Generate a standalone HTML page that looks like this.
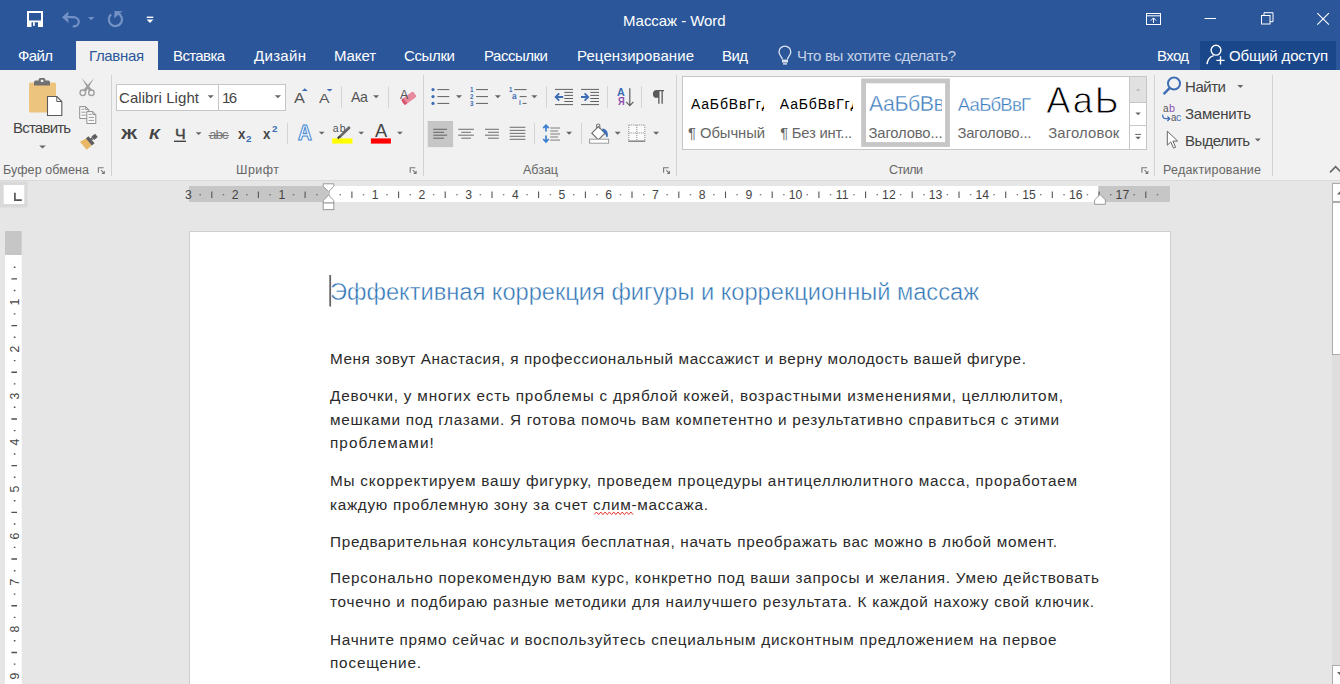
<!DOCTYPE html>
<html lang="ru"><head><meta charset="utf-8"><title>Массаж - Word</title>
<style>
*{box-sizing:border-box;margin:0;padding:0}
html,body{width:1340px;height:684px;overflow:hidden;background:#e6e6e6;font-family:"Liberation Sans",sans-serif}
.t{position:absolute;white-space:pre;display:block}
.a{position:absolute}
#title{left:0;top:0;width:1340px;height:70px;background:#2b579a}
#tab{left:76px;top:41px;width:82px;height:30px;background:#f1f1f1}
#share{left:1200px;top:41px;width:136px;height:29px;background:#19478a}
#ribbon{left:0;top:70px;width:1340px;height:111px;background:#f1f1f1;border-bottom:1px solid #dadada}
.vs{position:absolute;width:1px;background:#d2d2d2}
#page{left:189px;top:231px;width:982px;height:453px;background:#fff;border:1px solid #cfcfcf;border-bottom:none}
svg{position:absolute;overflow:hidden}

</style></head><body>
<div class="a" id="title"></div>
<div class="a" id="tab"></div>
<div class="a" id="share"></div>
<div class="a" id="ribbon"></div>
<div class="vs" style="left:111px;top:75px;height:100.5px"></div>
<div class="vs" style="left:423px;top:75px;height:100.5px"></div>
<div class="vs" style="left:676px;top:75px;height:100.5px"></div>
<div class="vs" style="left:1154px;top:75px;height:100.5px"></div>
<div class="vs" style="left:1272px;top:75px;height:100.5px"></div>
<div class="a" id="page"></div>
<svg width="1340" height="684" viewBox="0 0 1340 684" style="left:0;top:0"><path d="M27 11h16v16h-16z M29 13v7.5h12v-7.5z M31.5 22.2v4.8h6.5v-4.8z" fill="#fff" fill-rule="evenodd"/>
<rect x="33" y="22.2" width="1.8" height="3.6" fill="#fff"/>
<path d="M63.5 17.2H73.5a5.3 4.6 0 0 1 0 9.2H72.8" fill="none" stroke="#7391c6" stroke-width="2.2"/>
<path d="M62 17.2l6.4-5.6v3.4l-2.6 2.2 2.6 2.4v3.3z" fill="#7391c6"/>
<path d="M88 17h6.4l-3.2 3.2z" fill="#7391c6"/>
<path d="M117.5 13.2a6.6 6.6 0 1 1 -6.3 1.2" fill="none" stroke="#7391c6" stroke-width="2.3"/>
<path d="M114.2 18.5l0.3-7.6 8.2 0.4-3.2 2.2z" fill="#7391c6"/>
<rect x="146.7" y="16.6" width="6.6" height="1.4" fill="#fff"/>
<path d="M146.6 19.6h6.8l-3.4 3.4z" fill="#fff"/>
<rect x="1146.5" y="13.5" width="14" height="11" fill="none" stroke="#fff" stroke-width="1"/>
<path d="M1146.5 15.8h14" stroke="#fff" stroke-width="1"/>
<path d="M1153.5 23V18.2M1150.8 20.6l2.7-2.7 2.7 2.7" fill="none" stroke="#fff" stroke-width="1"/>
<path d="M1204.5 18.5h11.5" stroke="#fff" stroke-width="1"/>
<rect x="1261.5" y="15.5" width="8.5" height="8.5" fill="none" stroke="#fff" stroke-width="1"/>
<path d="M1264 15.5v-2.8h9v9h-3" fill="none" stroke="#fff" stroke-width="1"/>
<path d="M1317.3 13.2l11.6 11.4M1328.9 13.2l-11.6 11.4" stroke="#fff" stroke-width="1.1"/>
<path d="M782.4 59.6c0-2.6-3.4-4.2-3.4-7.6a5.9 5.9 0 0 1 11.8 0c0 3.4-3.4 5-3.4 7.6" fill="none" stroke="#dbe3f1" stroke-width="1.3"/>
<rect x="782" y="59.6" width="6" height="2.9" fill="#dbe3f1"/><rect x="783" y="63.2" width="4" height="1.4" fill="#dbe3f1"/>
<circle cx="1216" cy="50.2" r="4.9" fill="none" stroke="#fff" stroke-width="1.4"/>
<path d="M1207 64.2c0.5-4.6 3.2-7.6 6.6-8.6" fill="none" stroke="#fff" stroke-width="1.4"/>
<path d="M1216.4 60.4h8.2M1220.5 56.3v8.2" stroke="#fff" stroke-width="1.4"/>
<rect x="29" y="82.5" width="27" height="30" rx="1.5" fill="#edc47e"/>
<path d="M34 85.6v-3.4a1.6 1.6 0 0 1 1.6-1.6h3v-1a1.6 1.6 0 0 1 1.6-1.6h3.6a1.6 1.6 0 0 1 1.6 1.6v1h3a1.6 1.6 0 0 1 1.6 1.6v3.4z" fill="#717171"/>
<rect x="40.8" y="79.8" width="2.6" height="2.2" fill="#f1f1f1"/>
<path d="M47.5 96.5h9.3l5 5v14h-14.3z" fill="#fff" stroke="#5a5a5a" stroke-width="1.1"/>
<path d="M56.8 96.5v5h5" fill="none" stroke="#5a5a5a" stroke-width="1"/>
<path d="M39.2 145.4h6.6l-3.3 3.2z" fill="#666"/>
<path d="M81.6 78L92 89.6 89.3 91.2z" fill="#9e9e9e"/><path d="M94.1 78L83.7 89.6 86.4 91.2z" fill="#9e9e9e"/>
<circle cx="82.8" cy="92.8" r="2.8" fill="none" stroke="#9e9e9e" stroke-width="1.3"/><circle cx="91.4" cy="92.8" r="2.8" fill="none" stroke="#9e9e9e" stroke-width="1.3"/>
<path d="M79.7 106.6h6l3 3v8.9h-9z" fill="#fafafa" stroke="#8f8f8f" stroke-width="1"/><path d="M85.7 106.6v3h3" fill="none" stroke="#8f8f8f" stroke-width="1"/>
<path d="M81.4 109.2h3M81.4 112.2h4.4M81.4 115.2h4.4" stroke="#9a9a9a" stroke-width="1"/>
<path d="M86.8 111.6h6l3 3v8.9h-9z" fill="#fafafa" stroke="#8f8f8f" stroke-width="1"/><path d="M92.8 111.6v3h3" fill="none" stroke="#8f8f8f" stroke-width="1"/>
<path d="M88.6 114.4h3M88.6 117.4h5.4M88.6 120.4h5.4" stroke="#9a9a9a" stroke-width="1"/>
<path d="M79.9 141.8l6.2-3.4 5.6 7-5 4.4z" fill="#e9b765"/>
<path d="M87.2 137.4l6 7" stroke="#5e5e5e" stroke-width="3.6"/>
<path d="M91 139.4l1.6-1.2" stroke="#5e5e5e" stroke-width="2.4"/>
<rect x="-2.3" y="-2.2" width="4.6" height="4.4" transform="translate(94.6 136.8) rotate(-38)" fill="#5e5e5e"/>
<path d="M98.4 172.79999999999998V167.7h5.2" fill="none" stroke="#777" stroke-width="1.1"/>
<path d="M101.0 170.1l3 3" fill="none" stroke="#777" stroke-width="1.1"/>
<path d="M104.80000000000001 170.6v3.4h-3.4z" fill="#777"/>
<path d="M410.2 172.79999999999998V167.7h5.2" fill="none" stroke="#777" stroke-width="1.1"/>
<path d="M412.8 170.1l3 3" fill="none" stroke="#777" stroke-width="1.1"/>
<path d="M416.59999999999997 170.6v3.4h-3.4z" fill="#777"/>
<path d="M663.6 172.79999999999998V167.7h5.2" fill="none" stroke="#777" stroke-width="1.1"/>
<path d="M666.2 170.1l3 3" fill="none" stroke="#777" stroke-width="1.1"/>
<path d="M670.0 170.6v3.4h-3.4z" fill="#777"/>
<path d="M1141.9 172.79999999999998V167.7h5.2" fill="none" stroke="#777" stroke-width="1.1"/>
<path d="M1144.5 170.1l3 3" fill="none" stroke="#777" stroke-width="1.1"/>
<path d="M1148.3000000000002 170.6v3.4h-3.4z" fill="#777"/>
<path d="M1330 172.4l5.6-5.8 5.6 5.8" fill="none" stroke="#666" stroke-width="1.6"/>
<rect x="116.5" y="84.5" width="102" height="26" fill="#fff" stroke="#c6c6c6"/>
<rect x="218.5" y="84.5" width="67" height="26" fill="#fff" stroke="#c6c6c6"/>
<path d="M207.6 95.2h6.2l-3.1 3.1z" fill="#666"/>
<path d="M274.8 95.2h6.2l-3.1 3.1z" fill="#666"/>
<path d="M301.9 90.9h5.9l-2.95-2.6z" fill="#3d6db5"/>
<path d="M326.7 89h5.9l-2.95 2.6z" fill="#3d6db5"/>
<path d="M341.5 86.5V107.7" stroke="#d4d4d4" stroke-width="1"/>
<path d="M388.5 86.5V107.7" stroke="#d4d4d4" stroke-width="1"/>
<path d="M373.1 95.2h6l-3.0 3z" fill="#666"/>
<g transform="translate(408.9 98.2) rotate(-36)"><rect x="-7.4" y="-3.3" width="14.8" height="6.6" rx="1.6" fill="#e88a9e"/><path d="M-7.4 -1.7a1.6 1.6 0 0 1 1.6-1.6h1.2v6.6h-1.2a1.6 1.6 0 0 1-1.6-1.6z" fill="#d9536f"/></g>
<path d="M174 141.3h12" stroke="#444" stroke-width="1.4"/>
<path d="M195.8 132.2h5.8l-2.9 2.9z" fill="#666"/>
<path d="M208.5 135.6h20.5" stroke="#666" stroke-width="1"/>
<path d="M287.5 123V144" stroke="#d4d4d4" stroke-width="1"/>
<path d="M318.8 131.7h5.8l-2.9 2.9z" fill="#666"/>
<rect x="332.2" y="138.4" width="20.2" height="5.2" fill="#ffff00"/>
<path d="M339.2 137.4l10.6-10.4" stroke="#666" stroke-width="2.6"/><path d="M337.6 138.4l2.4-2.2" stroke="#444" stroke-width="2"/>
<path d="M358.3 131.7h5.8l-2.9 2.9z" fill="#666"/>
<rect x="370.9" y="138.4" width="20" height="5.2" fill="#ff0000"/>
<path d="M397 131.7h5.8l-2.9 2.9z" fill="#666"/><circle cx="433" cy="89.6" r="1.6" fill="#3d6db5"/>
<path d="M437.4 89.6H449.3" stroke="#5f5f5f" stroke-width="1"/>
<path d="M476.1 89.6H488" stroke="#5f5f5f" stroke-width="1"/>
<circle cx="433" cy="96.6" r="1.6" fill="#3d6db5"/>
<path d="M437.4 96.6H449.3" stroke="#5f5f5f" stroke-width="1"/>
<path d="M476.1 96.6H488" stroke="#5f5f5f" stroke-width="1"/>
<circle cx="433" cy="103.4" r="1.6" fill="#3d6db5"/>
<path d="M437.4 103.4H449.3" stroke="#5f5f5f" stroke-width="1"/>
<path d="M476.1 103.4H488" stroke="#5f5f5f" stroke-width="1"/>
<path d="M456 95.2h6l-3.0 3z" fill="#666"/>
<path d="M494.8 95.2h6l-3.0 3z" fill="#666"/>
<path d="M531.3 95.2h6l-3.0 3z" fill="#666"/>
<path d="M514.3 89.6H526.6M519.7 96.6H526.6M522.6 103.4H526.6" stroke="#5f5f5f" stroke-width="1"/>
<path d="M546.5 86.2V107.7" stroke="#d4d4d4" stroke-width="1"/>
<path d="M607.5 86.2V107.7" stroke="#d4d4d4" stroke-width="1"/>
<path d="M641.5 86.2V107.7" stroke="#d4d4d4" stroke-width="1"/>
<path d="M555 89.4h18M555 104.6h18" stroke="#5f5f5f" stroke-width="1"/>
<path d="M564.3 92.4h8.7" stroke="#5f5f5f" stroke-width="1"/>
<path d="M564.3 95.4h8.7" stroke="#5f5f5f" stroke-width="1"/>
<path d="M564.3 98.5h8.7" stroke="#5f5f5f" stroke-width="1"/>
<path d="M564.3 101.5h8.7" stroke="#5f5f5f" stroke-width="1"/>
<path d="M555.6 97h7.6M559.2 93.4l-3.6 3.6 3.6 3.6" fill="none" stroke="#3d6db5" stroke-width="1.8"/>
<path d="M581 89.4h18M581 104.6h18" stroke="#5f5f5f" stroke-width="1"/>
<path d="M590.3 92.4h8.7" stroke="#5f5f5f" stroke-width="1"/>
<path d="M590.3 95.4h8.7" stroke="#5f5f5f" stroke-width="1"/>
<path d="M590.3 98.5h8.7" stroke="#5f5f5f" stroke-width="1"/>
<path d="M590.3 101.5h8.7" stroke="#5f5f5f" stroke-width="1"/>
<path d="M581 97h7M584.6 93.4l3.6 3.6-3.6 3.6" fill="none" stroke="#3d6db5" stroke-width="1.8"/>
<path d="M629.8 88.2V105.4M626.2 101.8l3.6 3.8 3.6-3.8" fill="none" stroke="#5f5f5f" stroke-width="1.2"/>
<path d="M656.8 90h7.2v1.2h-1.2v12.6h-1.3V91.2h-2v12.6h-1.3V97.8h-1.4a3.9 3.9 0 0 1 0-7.8z" fill="#5a5a5a"/>
<rect x="427.7" y="121" width="25.4" height="26.1" fill="#c6c6c6"/>
<path d="M433.3 129.3H447.1" stroke="#6a6a6a" stroke-width="1.1"/>
<path d="M458.2 129.3H473.9" stroke="#777" stroke-width="1.1"/>
<path d="M485 129.3H498.9" stroke="#777" stroke-width="1.1"/>
<path d="M433.3 132.3H444.1" stroke="#6a6a6a" stroke-width="1.1"/>
<path d="M461.3 132.3H471" stroke="#777" stroke-width="1.1"/>
<path d="M488 132.3H498.9" stroke="#777" stroke-width="1.1"/>
<path d="M433.3 135.2H447.1" stroke="#6a6a6a" stroke-width="1.1"/>
<path d="M458.2 135.2H473.9" stroke="#777" stroke-width="1.1"/>
<path d="M485 135.2H498.9" stroke="#777" stroke-width="1.1"/>
<path d="M433.3 138.2H444.1" stroke="#6a6a6a" stroke-width="1.1"/>
<path d="M461.3 138.2H471" stroke="#777" stroke-width="1.1"/>
<path d="M488 138.2H498.9" stroke="#777" stroke-width="1.1"/>
<path d="M509.7 127.3H525.4" stroke="#777" stroke-width="1.1"/>
<path d="M509.7 130.4H525.4" stroke="#777" stroke-width="1.1"/>
<path d="M509.7 133.4H525.4" stroke="#777" stroke-width="1.1"/>
<path d="M509.7 136.3H525.4" stroke="#777" stroke-width="1.1"/>
<path d="M509.7 139.3H525.4" stroke="#777" stroke-width="1.1"/>
<path d="M534.5 123V144" stroke="#d4d4d4" stroke-width="1"/>
<path d="M581.5 123V144" stroke="#d4d4d4" stroke-width="1"/>
<path d="M546 125.2V131.6M543.2 128.2l2.8-3 2.8 3M546 135.4V142M543.2 139l2.8 3 2.8-3" fill="none" stroke="#3a7fcf" stroke-width="1.7"/>
<path d="M550.2 128H560" stroke="#888" stroke-width="1.1"/>
<path d="M550.2 131H558" stroke="#888" stroke-width="1.1"/>
<path d="M550.2 134H560" stroke="#888" stroke-width="1.1"/>
<path d="M550.2 137H558" stroke="#888" stroke-width="1.1"/>
<path d="M550.2 140.1H560" stroke="#888" stroke-width="1.1"/>
<path d="M566.1 131.7h6l-3.0 3z" fill="#666"/>
<path d="M598.4 126.6l6.6 6.6-6.6 6.6-6.6-6.6z" fill="#fff" stroke="#666" stroke-width="1.1"/>
<path d="M596.6 129v-3.4a1.6 1.6 0 0 1 3.2 0v3.4" fill="none" stroke="#777" stroke-width="1.1"/>
<path d="M602.6 128.4c3.6 0.4 5.6 3 5.2 7.8-0.1 1.3-1.2 1.5-1.6 0.3-0.7-2.6-1.8-4.2-4.4-5.6z" fill="#3d6db5"/>
<rect x="589.6" y="139.2" width="19" height="4" fill="#fff" stroke="#9a9a9a" stroke-width="1"/>
<path d="M614.7 131.7h6l-3.0 3z" fill="#666"/>
<rect x="628.8" y="125" width="16" height="16" fill="#fbfbfb"/>
<path d="M628.8 125h16v16M628.8 125v16M636.8 125v16M628.8 133h16" fill="none" stroke="#8a8a8a" stroke-width="1" stroke-dasharray="1 1"/>
<path d="M628.3 141.2h17" stroke="#8a8a8a" stroke-width="1.6"/>
<path d="M653.1 131.7h6l-3.0 3z" fill="#666"/>
<rect x="682.5" y="76.5" width="464" height="73" fill="#fff" stroke="#c6c6c6"/>
<rect x="863.6" y="80.9" width="83.9" height="63.6" fill="#fff" stroke="#c6c6c6" stroke-width="4.8"/>
<rect x="1129.5" y="76.5" width="17" height="26" fill="#e1e1e1" stroke="#c6c6c6"/>
<rect x="1129.5" y="102.5" width="17" height="23" fill="#fff" stroke="#c6c6c6"/>
<rect x="1129.5" y="125.5" width="17" height="24" fill="#fff" stroke="#c6c6c6"/>
<path d="M1135.4 91h5.4l-2.7-2.7z" fill="#c3c3c3"/>
<path d="M1135.4 112.6h5.4l-2.7 2.7z" fill="#666"/>
<path d="M1135.2 134.4h5.8" stroke="#666" stroke-width="1"/><path d="M1135.4 136.8h5.4l-2.7 2.7z" fill="#666"/>
<circle cx="1174" cy="83.5" r="6" fill="none" stroke="#3d6db5" stroke-width="2"/>
<path d="M1169.8 87.9l-6.2 6.2" stroke="#3d6db5" stroke-width="2.4"/>
<path d="M1237.3 85h6l-3.0 3z" fill="#666"/>
<path d="M1254.8 138.4h6l-3.0 3z" fill="#666"/>
<path d="M1162.6 114.4c0 3 1 4.3 3.4 4.3h3.6M1167.4 116.4l2.4 2.3-2.4 2.3" fill="none" stroke="#3d6db5" stroke-width="1.2"/>
<path d="M1167.3 131.2v14l3.5-3.3 2.7 6.2 2.1-0.9-2.7-6.1h4.8z" fill="#fff" stroke="#666" stroke-width="1"/>
<rect x="0" y="181.5" width="27.5" height="26" fill="#d9d9d9"/>
<rect x="3.7" y="185" width="20.6" height="19" fill="#fff"/>
<path d="M14.9 192.8V200.2H21.8" fill="none" stroke="#555" stroke-width="1.7"/>
<rect x="189" y="186" width="141" height="16" fill="#c6c6c6"/>
<rect x="330" y="186" width="768.3" height="16" fill="#fff"/>
<rect x="1098.3" y="186" width="71.7" height="16" fill="#c6c6c6"/>
<path d="M199.4 194.7h1.5M211.8 191.5V198M222.7 194.7h1.5M246.1 194.7h1.5M258.4 191.5V198M269.4 194.7h1.5M292.8 194.7h1.5M305.1 191.5V198M316.1 194.7h1.5M339.5 194.7h1.5M351.9 191.5V198M362.8 194.7h1.5M386.2 194.7h1.5M398.6 191.5V198M409.5 194.7h1.5M432.9 194.7h1.5M445.2 191.5V198M456.2 194.7h1.5M479.6 194.7h1.5M492.0 191.5V198M502.9 194.7h1.5M526.3 194.7h1.5M538.6 191.5V198M549.6 194.7h1.5M573.0 194.7h1.5M585.4 191.5V198M596.3 194.7h1.5M619.7 194.7h1.5M632.0 191.5V198M643.0 194.7h1.5M666.4 194.7h1.5M678.8 191.5V198M689.7 194.7h1.5M713.1 194.7h1.5M725.5 191.5V198M736.4 194.7h1.5M759.8 194.7h1.5M772.2 191.5V198M783.1 194.7h1.5M806.5 194.7h1.5M818.9 191.5V198M829.8 194.7h1.5M853.2 194.7h1.5M865.6 191.5V198M876.5 194.7h1.5M899.9 194.7h1.5M912.2 191.5V198M923.2 194.7h1.5M946.6 194.7h1.5M959.0 191.5V198M969.9 194.7h1.5M993.3 194.7h1.5M1005.7 191.5V198M1016.6 194.7h1.5M1040.0 194.7h1.5M1052.3 191.5V198M1063.3 194.7h1.5M1086.7 194.7h1.5M1099.1 191.5V198M1110.0 194.7h1.5M1133.4 194.7h1.5M1145.8 191.5V198M1156.7 194.7h1.5" stroke="#555" stroke-width="1.1" fill="none"/>
<path d="M323.2 183.8h10.6v2.6l-5.3 5.2-5.3-5.2z" fill="#fff" stroke="#9a9a9a" stroke-width="1"/>
<path d="M323.2 203v-2.6l5.3-5.2 5.3 5.2v2.6z" fill="#fff" stroke="#9a9a9a" stroke-width="1"/>
<rect x="323.2" y="203" width="10.6" height="6.6" fill="#fff" stroke="#9a9a9a" stroke-width="1"/>
<path d="M1094.6 204.3v-4.4l5.4-5.4 5.4 5.4v4.4z" fill="#fff" stroke="#9a9a9a" stroke-width="1"/>
<rect x="5" y="231" width="16.7" height="24" fill="#c6c6c6"/>
<rect x="5" y="255" width="16.7" height="429" fill="#fff"/>
<path d="M13.8 267.2h1.6M11.4 278.9H17M13.8 290.5h1.6M13.8 313.9h1.6M11.4 325.6H17M13.8 337.2h1.6M13.8 360.6h1.6M11.4 372.2H17M13.8 383.9h1.6M13.8 407.3h1.6M11.4 419.0H17M13.8 430.6h1.6M13.8 454.0h1.6M11.4 465.6H17M13.8 477.3h1.6M13.8 500.7h1.6M11.4 512.4H17M13.8 524.0h1.6M13.8 547.4h1.6M11.4 559.0H17M13.8 570.7h1.6M13.8 594.1h1.6M11.4 605.8H17M13.8 617.4h1.6M13.8 640.8h1.6M11.4 652.5H17M13.8 664.1h1.6M13.8 687.5h1.6" stroke="#505050" stroke-width="1.4" fill="none"/>
<rect x="1332" y="182" width="8" height="502" fill="#dedede"/>
<rect x="1332.5" y="183.5" width="10" height="18" fill="#fff" stroke="#ababab"/>
<rect x="1332.5" y="202.5" width="10" height="152" fill="#fff" stroke="#ababab"/>
<rect x="1332.5" y="665.5" width="10" height="19" fill="#fff" stroke="#ababab"/>
<path d="M1337 194.4l4-4.2v4.2z" fill="#666"/>
<path d="M1337 672l4 4.2v-4.2z" fill="#666"/>
<rect x="329.3" y="275" width="1.8" height="31.5" fill="#666"/>
<path d="M594.4 514.4L596.5 512.0L598.7 514.6L600.8 512.0L603.0 514.6L605.1 512.0L607.3 514.6L609.4 512.0L611.6 514.6L613.7 512.0L615.9 514.6L618.0 512.0L620.2 514.6L622.3 512.0L624.5 514.6L626.6 512.0L628.8 514.6L630.9 512.0L633.1 514.6" fill="none" stroke="#e8342f" stroke-width="1"/></svg>
<span class="t" style="left:623px;top:13.00px;font-size:15px;line-height:15px;color:#ffffff;letter-spacing:-0.057px;">Массаж - Word</span>
<span class="t" style="left:18px;top:47.80px;font-size:15px;line-height:15px;color:#ffffff;letter-spacing:-0.630px;">Файл</span>
<span class="t" style="left:89px;top:47.80px;font-size:15px;line-height:15px;color:#2b579a;letter-spacing:-0.349px;">Главная</span>
<span class="t" style="left:173px;top:47.80px;font-size:15px;line-height:15px;color:#ffffff;letter-spacing:-0.628px;">Вставка</span>
<span class="t" style="left:254px;top:47.80px;font-size:15px;line-height:15px;color:#ffffff;letter-spacing:0.316px;">Дизайн</span>
<span class="t" style="left:334px;top:47.80px;font-size:15px;line-height:15px;color:#ffffff;letter-spacing:-0.113px;">Макет</span>
<span class="t" style="left:404px;top:47.80px;font-size:15px;line-height:15px;color:#ffffff;letter-spacing:-0.362px;">Ссылки</span>
<span class="t" style="left:484px;top:47.80px;font-size:15px;line-height:15px;color:#ffffff;letter-spacing:-0.475px;">Рассылки</span>
<span class="t" style="left:577px;top:47.80px;font-size:15px;line-height:15px;color:#ffffff;letter-spacing:0.090px;">Рецензирование</span>
<span class="t" style="left:722px;top:47.80px;font-size:15px;line-height:15px;color:#ffffff;letter-spacing:-0.570px;">Вид</span>
<span class="t" style="left:797px;top:47.80px;font-size:15px;line-height:15px;color:#c6d2e8;letter-spacing:-0.325px;">Что вы хотите сделать?</span>
<span class="t" style="left:1157px;top:47.80px;font-size:15px;line-height:15px;color:#ffffff;letter-spacing:-0.646px;">Вход</span>
<span class="t" style="left:1229px;top:47.80px;font-size:15px;line-height:15px;color:#ffffff;letter-spacing:-0.162px;">Общий доступ</span>
<span class="t" style="left:3px;top:164.42px;font-size:12.5px;line-height:12.5px;color:#666;letter-spacing:0.097px;">Буфер обмена</span>
<span class="t" style="left:236px;top:164.42px;font-size:12.5px;line-height:12.5px;color:#666;letter-spacing:0.465px;">Шрифт</span>
<span class="t" style="left:523px;top:164.42px;font-size:12.5px;line-height:12.5px;color:#666;letter-spacing:-0.020px;">Абзац</span>
<span class="t" style="left:889px;top:164.42px;font-size:12.5px;line-height:12.5px;color:#666;letter-spacing:-0.504px;">Стили</span>
<span class="t" style="left:1163px;top:164.42px;font-size:12.5px;line-height:12.5px;color:#666;letter-spacing:0.213px;">Редактирование</span>
<span class="t" style="left:12.9px;top:120.30px;font-size:15px;line-height:15px;color:#444;letter-spacing:-0.756px;">Вставить</span>
<span class="t" style="left:119px;top:90.30px;font-size:15px;line-height:15px;color:#444;letter-spacing:0.065px;">Calibri Light</span>
<span class="t" style="left:222px;top:90.30px;font-size:15px;line-height:15px;color:#444;letter-spacing:-1.688px;">16</span>
<span class="t" style="left:1185px;top:79.30px;font-size:15px;line-height:15px;color:#444;letter-spacing:-0.453px;">Найти</span>
<span class="t" style="left:1185px;top:106.30px;font-size:15px;line-height:15px;color:#444;letter-spacing:-0.201px;">Заменить</span>
<span class="t" style="left:1185px;top:133.30px;font-size:15px;line-height:15px;color:#444;letter-spacing:-0.600px;">Выделить</span>
<span class="t" style="left:330px;top:280.74px;font-size:23.7px;line-height:23.7px;color:#2e74b5;letter-spacing:-0.028px;-webkit-text-stroke:0.45px #fff;">Эффективная коррекция фигуры и коррекционный массаж</span>
<span class="t" style="left:330px;top:350.75px;font-size:15.3px;line-height:15.3px;color:#2a2a2a;letter-spacing:0.576px;">Меня зовут Анастасия, я профессиональный массажист и верну молодость вашей фигуре.</span>
<span class="t" style="left:330px;top:387.85px;font-size:15.3px;line-height:15.3px;color:#2a2a2a;letter-spacing:0.795px;">Девочки, у многих есть проблемы с дряблой кожей, возрастными изменениями, целлюлитом,</span>
<span class="t" style="left:330px;top:411.65px;font-size:15.3px;line-height:15.3px;color:#2a2a2a;letter-spacing:0.696px;">мешками под глазами. Я готова помочь вам компетентно и результативно справиться с этими</span>
<span class="t" style="left:330px;top:435.45px;font-size:15.3px;line-height:15.3px;color:#2a2a2a;letter-spacing:1.066px;">проблемами!</span>
<span class="t" style="left:330px;top:472.95px;font-size:15.3px;line-height:15.3px;color:#2a2a2a;letter-spacing:0.784px;">Мы скорректируем вашу фигурку, проведем процедуры антицеллюлитного масса, проработаем</span>
<span class="t" style="left:330px;top:496.75px;font-size:15.3px;line-height:15.3px;color:#2a2a2a;letter-spacing:0.699px;">каждую проблемную зону за счет слим-массажа.</span>
<span class="t" style="left:330px;top:534.05px;font-size:15.3px;line-height:15.3px;color:#2a2a2a;letter-spacing:0.695px;">Предварительная консультация бесплатная, начать преображать вас можно в любой момент.</span>
<span class="t" style="left:330px;top:570.45px;font-size:15.3px;line-height:15.3px;color:#2a2a2a;letter-spacing:0.751px;">Персонально порекомендую вам курс, конкретно под ваши запросы и желания. Умею действовать</span>
<span class="t" style="left:330px;top:594.45px;font-size:15.3px;line-height:15.3px;color:#2a2a2a;letter-spacing:0.775px;">точечно и подбираю разные методики для наилучшего результата. К каждой нахожу свой ключик.</span>
<span class="t" style="left:330px;top:631.85px;font-size:15.3px;line-height:15.3px;color:#2a2a2a;letter-spacing:0.728px;">Начните прямо сейчас и воспользуйтесь специальным дисконтным предложением на первое</span>
<span class="t" style="left:330px;top:655.45px;font-size:15.3px;line-height:15.3px;color:#2a2a2a;letter-spacing:0.819px;">посещение.</span>
<span class="t" style="left:120.7px;top:127.00px;font-size:14.3px;line-height:14.3px;color:#444;font-weight:bold;transform:scaleX(1.254);transform-origin:0 0;">Ж</span>
<span class="t" style="left:148.5px;top:127.00px;font-size:14.3px;line-height:14.3px;color:#444;font-weight:bold;font-style:italic;transform:scaleX(1.228);transform-origin:0 0;">К</span>
<span class="t" style="left:174.5px;top:127.00px;font-size:14.3px;line-height:14.3px;color:#444;transform:scaleX(1.123);transform-origin:0 0;-webkit-text-stroke:0.4px #444;">Ч</span>
<span class="t" style="left:209px;top:127.67px;font-size:13.5px;line-height:13.5px;color:#777;letter-spacing:-1.091px;">abc</span>
<span class="t" style="left:237.6px;top:125.98px;font-size:15.5px;line-height:15.5px;color:#444;font-weight:bold;transform:scaleX(0.858);transform-origin:0 0;">x</span>
<span class="t" style="left:246px;top:135.30px;font-size:8.5px;line-height:8.5px;color:#3d6db5;font-weight:bold;transform:scaleX(1.162);transform-origin:0 0;">2</span>
<span class="t" style="left:263px;top:125.98px;font-size:15.5px;line-height:15.5px;color:#444;font-weight:bold;transform:scaleX(0.858);transform-origin:0 0;">x</span>
<span class="t" style="left:272px;top:125.30px;font-size:8.5px;line-height:8.5px;color:#3d6db5;font-weight:bold;transform:scaleX(1.162);transform-origin:0 0;">2</span>
<span class="t" style="left:293.9px;top:90.68px;font-size:14.2px;line-height:14.2px;color:#555;transform:scaleX(1.151);transform-origin:0 0;">A</span>
<span class="t" style="left:318.9px;top:91.99px;font-size:13.6px;line-height:13.6px;color:#555;transform:scaleX(1.157);transform-origin:0 0;">A</span>
<span class="t" style="left:351.1px;top:89.78px;font-size:14.2px;line-height:14.2px;color:#555;letter-spacing:-0.659px;">Aa</span>
<span class="t" style="left:400px;top:87.63px;font-size:13.2px;line-height:13.2px;color:#555;transform:scaleX(0.944);transform-origin:0 0;">A</span>
<span class="t" style="left:298px;top:123.20px;font-size:21.5px;line-height:21.5px;color:#fff;font-weight:bold;transform:scaleX(0.889);transform-origin:0 0;-webkit-text-stroke:1.1px #4a8bd4;text-shadow:0 0 1.5px #8bb8ea;">A</span>
<span class="t" style="left:332.8px;top:122.91px;font-size:10.5px;line-height:10.5px;color:#555;letter-spacing:1.113px;">ab</span>
<span class="t" style="left:374.8px;top:122.80px;font-size:17.6px;line-height:17.6px;color:#444;transform:scaleX(1.038);transform-origin:0 0;">A</span>
<span class="t" style="left:469.7px;top:85.95px;font-size:7.5px;line-height:7.5px;color:#3d6db5;font-weight:bold;transform:scaleX(0.839);transform-origin:0 0;">1</span>
<span class="t" style="left:469.7px;top:92.95px;font-size:7.5px;line-height:7.5px;color:#3d6db5;font-weight:bold;transform:scaleX(0.839);transform-origin:0 0;">2</span>
<span class="t" style="left:469.7px;top:99.75px;font-size:7.5px;line-height:7.5px;color:#3d6db5;font-weight:bold;transform:scaleX(0.839);transform-origin:0 0;">3</span>
<span class="t" style="left:508.6px;top:86.23px;font-size:8px;line-height:8px;color:#3d6db5;font-weight:bold;transform:scaleX(0.764);transform-origin:0 0;">1</span>
<span class="t" style="left:512.4px;top:92.20px;font-size:8.5px;line-height:8.5px;color:#3d6db5;font-weight:bold;transform:scaleX(0.972);transform-origin:0 0;">a</span>
<span class="t" style="left:519.2px;top:99.43px;font-size:8px;line-height:8px;color:#3d6db5;font-weight:bold;transform:scaleX(0.806);transform-origin:0 0;">i</span>
<span class="t" style="left:617.2px;top:86.66px;font-size:10.8px;line-height:10.8px;color:#3d6db5;font-weight:bold;transform:scaleX(0.998);transform-origin:0 0;">A</span>
<span class="t" style="left:617.5px;top:96.26px;font-size:10.8px;line-height:10.8px;color:#8e4fb0;font-weight:bold;transform:scaleX(0.863);transform-origin:0 0;">Я</span>
<span class="t" style="left:690.9px;top:96.85px;font-size:14px;line-height:14px;color:#000;width:72.8px;overflow:hidden;letter-spacing:0.85px;">АаБбВвГгД</span>
<span class="t" style="left:779.8px;top:96.85px;font-size:14px;line-height:14px;color:#000;width:73px;overflow:hidden;letter-spacing:0.85px;">АаБбВвГгД</span>
<span class="t" style="left:688px;top:125.87px;font-size:14.8px;line-height:14.8px;color:#666;letter-spacing:-0.059px;">¶ Обычный</span>
<span class="t" style="left:780.2px;top:125.87px;font-size:14.8px;line-height:14.8px;color:#666;letter-spacing:-0.226px;">¶ Без инт...</span>
<span class="t" style="left:869px;top:94.28px;font-size:21.4px;line-height:21.4px;color:#3b7cbd;width:73px;overflow:hidden;letter-spacing:-0.5px;-webkit-text-stroke:0.4px #fff;">АаБбВвГ</span>
<span class="t" style="left:868.5px;top:125.87px;font-size:14.8px;line-height:14.8px;color:#666;letter-spacing:-0.144px;">Заголово...</span>
<span class="t" style="left:957.8px;top:95.76px;font-size:18.6px;line-height:18.6px;color:#3b7cbd;letter-spacing:-0.809px;-webkit-text-stroke:0.35px #fff;">АаБбВвГ</span>
<span class="t" style="left:957.4px;top:125.87px;font-size:14.8px;line-height:14.8px;color:#666;letter-spacing:-0.134px;">Заголово...</span>
<span class="t" style="left:1046.2px;top:82.66px;font-size:36.2px;line-height:36.2px;color:#000;letter-spacing:1.989px;-webkit-text-stroke:0.9px #fff;">АаЬ</span>
<span class="t" style="left:1048.2px;top:125.87px;font-size:14.8px;line-height:14.8px;color:#666;letter-spacing:0.190px;">Заголовок</span>
<span class="t" style="left:1163px;top:102.93px;font-size:11.3px;line-height:11.3px;color:#555;transform:scaleX(0.889);transform-origin:0 0;">a</span>
<span class="t" style="left:1168.8px;top:102.93px;font-size:11.3px;line-height:11.3px;color:#8e4fb0;transform:scaleX(0.953);transform-origin:0 0;">b</span>
<span class="t" style="left:1171px;top:112.23px;font-size:11.3px;line-height:11.3px;color:#555;transform:scaleX(0.858);transform-origin:0 0;">a</span>
<span class="t" style="left:1176.4px;top:112.23px;font-size:11.3px;line-height:11.3px;color:#3d6db5;transform:scaleX(0.919);transform-origin:0 0;">c</span>
<span class="t" style="left:188.39999999999998px;top:188.67px;font-size:12.2px;line-height:12.2px;color:#444;transform:translateX(-50%);">3</span>
<span class="t" style="left:235.1px;top:188.67px;font-size:12.2px;line-height:12.2px;color:#444;transform:translateX(-50%);">2</span>
<span class="t" style="left:281.8px;top:188.67px;font-size:12.2px;line-height:12.2px;color:#444;transform:translateX(-50%);">1</span>
<span class="t" style="left:375.2px;top:188.67px;font-size:12.2px;line-height:12.2px;color:#444;transform:translateX(-50%);">1</span>
<span class="t" style="left:421.9px;top:188.67px;font-size:12.2px;line-height:12.2px;color:#444;transform:translateX(-50%);">2</span>
<span class="t" style="left:468.6px;top:188.67px;font-size:12.2px;line-height:12.2px;color:#444;transform:translateX(-50%);">3</span>
<span class="t" style="left:515.3px;top:188.67px;font-size:12.2px;line-height:12.2px;color:#444;transform:translateX(-50%);">4</span>
<span class="t" style="left:562.0px;top:188.67px;font-size:12.2px;line-height:12.2px;color:#444;transform:translateX(-50%);">5</span>
<span class="t" style="left:608.7px;top:188.67px;font-size:12.2px;line-height:12.2px;color:#444;transform:translateX(-50%);">6</span>
<span class="t" style="left:655.4000000000001px;top:188.67px;font-size:12.2px;line-height:12.2px;color:#444;transform:translateX(-50%);">7</span>
<span class="t" style="left:702.1px;top:188.67px;font-size:12.2px;line-height:12.2px;color:#444;transform:translateX(-50%);">8</span>
<span class="t" style="left:748.8px;top:188.67px;font-size:12.2px;line-height:12.2px;color:#444;transform:translateX(-50%);">9</span>
<span class="t" style="left:795.5px;top:188.67px;font-size:12.2px;line-height:12.2px;color:#444;transform:translateX(-50%);">10</span>
<span class="t" style="left:842.2px;top:188.67px;font-size:12.2px;line-height:12.2px;color:#444;transform:translateX(-50%);">11</span>
<span class="t" style="left:888.9000000000001px;top:188.67px;font-size:12.2px;line-height:12.2px;color:#444;transform:translateX(-50%);">12</span>
<span class="t" style="left:935.6px;top:188.67px;font-size:12.2px;line-height:12.2px;color:#444;transform:translateX(-50%);">13</span>
<span class="t" style="left:982.3000000000001px;top:188.67px;font-size:12.2px;line-height:12.2px;color:#444;transform:translateX(-50%);">14</span>
<span class="t" style="left:1029.0px;top:188.67px;font-size:12.2px;line-height:12.2px;color:#444;transform:translateX(-50%);">15</span>
<span class="t" style="left:1075.7px;top:188.67px;font-size:12.2px;line-height:12.2px;color:#444;transform:translateX(-50%);">16</span>
<span class="t" style="left:1122.4px;top:188.67px;font-size:12.2px;line-height:12.2px;color:#444;transform:translateX(-50%);">17</span>
<span class="t" style="left:14.9px;top:-10.33px;font-size:12.2px;line-height:12.2px;color:#444;top:302.2px;transform:translate(-50%,-50%) rotate(-90deg);">1</span>
<span class="t" style="left:14.9px;top:-10.33px;font-size:12.2px;line-height:12.2px;color:#444;top:348.9px;transform:translate(-50%,-50%) rotate(-90deg);">2</span>
<span class="t" style="left:14.9px;top:-10.33px;font-size:12.2px;line-height:12.2px;color:#444;top:395.6px;transform:translate(-50%,-50%) rotate(-90deg);">3</span>
<span class="t" style="left:14.9px;top:-10.33px;font-size:12.2px;line-height:12.2px;color:#444;top:442.3px;transform:translate(-50%,-50%) rotate(-90deg);">4</span>
<span class="t" style="left:14.9px;top:-10.33px;font-size:12.2px;line-height:12.2px;color:#444;top:489.0px;transform:translate(-50%,-50%) rotate(-90deg);">5</span>
<span class="t" style="left:14.9px;top:-10.33px;font-size:12.2px;line-height:12.2px;color:#444;top:535.7px;transform:translate(-50%,-50%) rotate(-90deg);">6</span>
<span class="t" style="left:14.9px;top:-10.33px;font-size:12.2px;line-height:12.2px;color:#444;top:582.4px;transform:translate(-50%,-50%) rotate(-90deg);">7</span>
<span class="t" style="left:14.9px;top:-10.33px;font-size:12.2px;line-height:12.2px;color:#444;top:629.1px;transform:translate(-50%,-50%) rotate(-90deg);">8</span>
<span class="t" style="left:14.9px;top:-10.33px;font-size:12.2px;line-height:12.2px;color:#444;top:675.8px;transform:translate(-50%,-50%) rotate(-90deg);">9</span>
</body></html>
